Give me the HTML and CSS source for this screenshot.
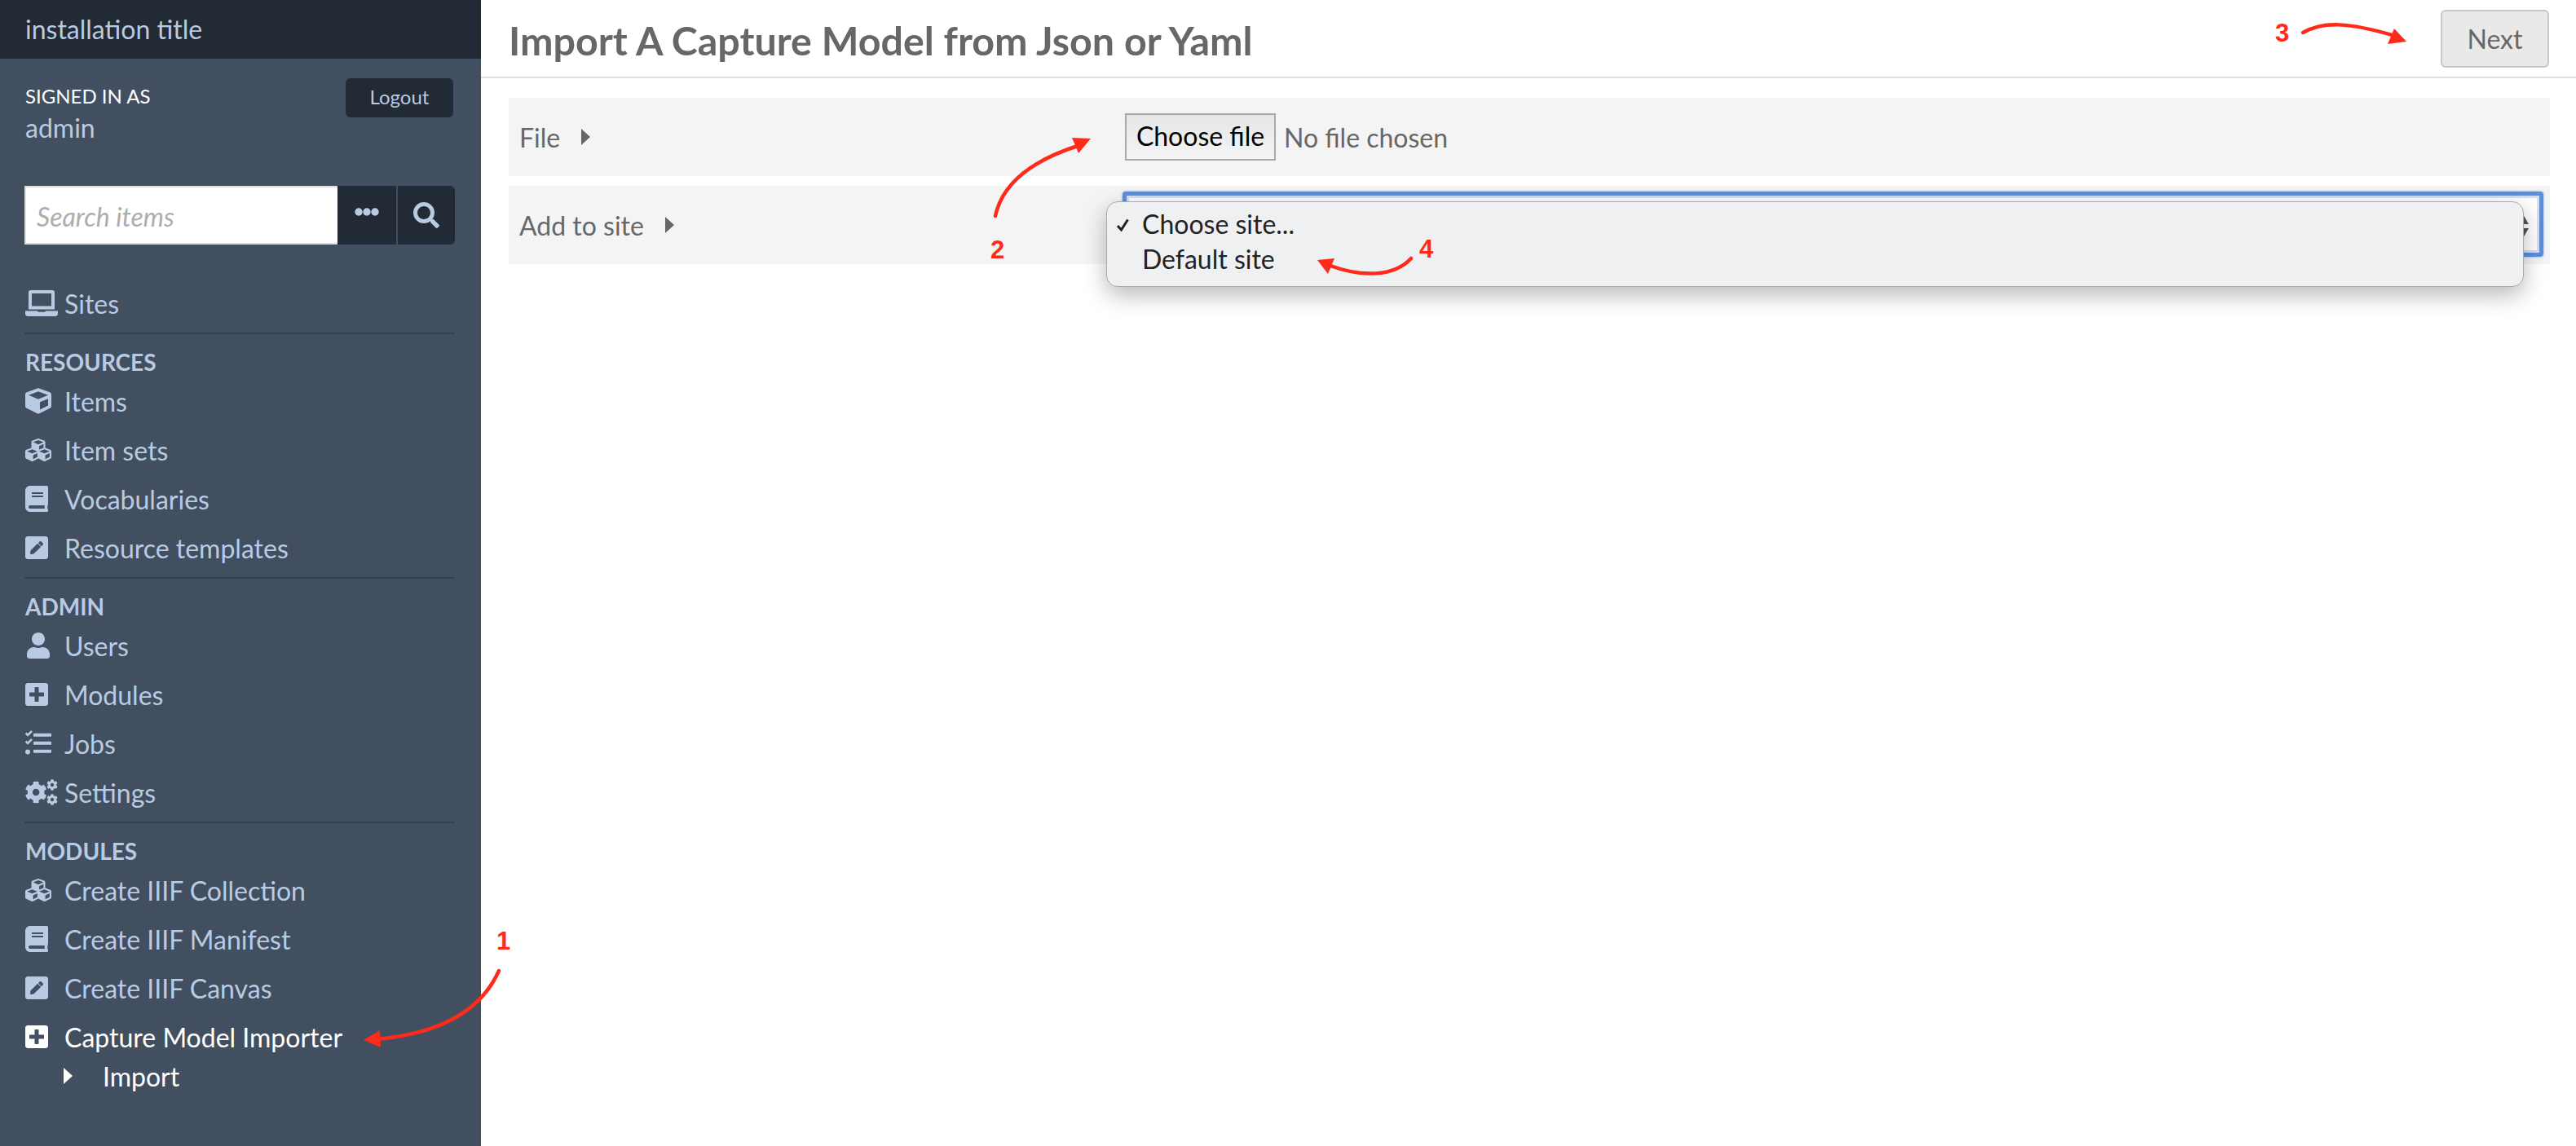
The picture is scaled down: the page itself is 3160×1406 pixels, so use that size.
FILE: index.html
```html
<!DOCTYPE html>
<html lang="en">
<head>
  <meta charset="UTF-8" />
  <title>Import A Capture Model</title>
  <link rel="stylesheet" href="styles.css">
</head>
<body>
  <svg class="defs" width="0" height="0">
    <symbol id="i-cube" viewBox="0 0 512 512"><path d="M239.1 6.3l-208 78c-18.7 7-31.1 25-31.1 45v225.1c0 18.2 10.3 34.8 26.5 42.9l208 104c13.5 6.8 29.4 6.8 42.9 0l208-104c16.3-8.1 26.5-24.8 26.5-42.9V129.3c0-20-12.4-37.9-31.1-44.9l-208-78C262 2.2 250 2.2 239.1 6.3zM256 68.4l192 72v1.1l-192 78-192-78v-1.1l192-72zm32 356V275.5l160-65v133.9l-160 80z"/></symbol>
    <symbol id="i-cubes" viewBox="0 0 512 512"><path d="M488.6 250.2L392 214V105.5c0-15-9.3-28.4-23.4-33.7l-100-37.5c-8.1-3.1-17.1-3.1-25.3 0l-100 37.5c-14.1 5.3-23.4 18.7-23.4 33.7V214l-96.6 36.2C9.3 255.5 0 268.9 0 283.9V394c0 13.6 7.7 26.1 19.9 32.2l100 50c10.1 5.1 22.1 5.1 32.2 0l103.9-52 103.9 52c10.1 5.1 22.1 5.1 32.2 0l100-50c12.2-6.1 19.9-18.6 19.9-32.2V283.9c0-15-9.3-28.4-23.4-33.7zM358 214.8l-85 31.9v-68.2l85-37v73.3zM154 104.1l102-38.2 102 38.2v.6l-102 41.4-102-41.4v-.6zm84 291.1l-85 42.5v-79.1l85-38.8v75.4zm0-112l-102 41.4-102-41.4v-.6l102-38.2 102 38.2v.6zm240 112l-85 42.5v-79.1l85-38.8v75.4zm0-112l-102 41.4-102-41.4v-.6l102-38.2 102 38.2v.6z"/></symbol>
    <symbol id="i-book" viewBox="0 0 448 512"><path d="M448 360V24c0-13.3-10.7-24-24-24H96C43 0 0 43 0 96v320c0 53 43 96 96 96h328c13.3 0 24-10.7 24-24v-16c0-7.5-3.5-14.3-8.9-18.7-4.2-15.4-4.2-59.3 0-74.7 5.4-4.3 8.9-11.1 8.9-18.6zM128 134c0-3.3 2.7-6 6-6h212c3.3 0 6 2.7 6 6v20c0 3.3-2.7 6-6 6H134c-3.3 0-6-2.7-6-6v-20zm0 64c0-3.3 2.7-6 6-6h212c3.3 0 6 2.7 6 6v20c0 3.3-2.7 6-6 6H134c-3.3 0-6-2.7-6-6v-20zm253.4 250H96c-17.7 0-32-14.3-32-32 0-17.6 14.4-32 32-32h285.4c-1.9 17.1-1.9 46.9 0 64z"/></symbol>
    <symbol id="i-pen" viewBox="0 0 448 512"><path d="M400 480H48c-26.5 0-48-21.5-48-48V80c0-26.5 21.5-48 48-48h352c26.5 0 48 21.5 48 48v352c0 26.5-21.5 48-48 48zM238.1 177.9L102.4 313.6l-6.3 57.1c-.8 7.6 5.6 14.1 13.3 13.3l57.1-6.3L302.2 242c2.3-2.3 2.3-6.1 0-8.5L246.7 178c-2.5-2.4-6.3-2.4-8.6-.1zM345 165.1L314.9 135c-9.4-9.4-24.6-9.4-33.9 0l-23.1 23.1c-2.3 2.3-2.3 6.1 0 8.5l55.5 55.5c2.3 2.3 6.1 2.3 8.5 0L345 199c9.3-9.3 9.3-24.5 0-33.9z"/></symbol>
    <symbol id="i-plus" viewBox="0 0 448 512"><path d="M400 32H48C21.5 32 0 53.5 0 80v352c0 26.5 21.5 48 48 48h352c26.5 0 48-21.5 48-48V80c0-26.5-21.5-48-48-48zm-32 252c0 6.6-5.4 12-12 12h-92v92c0 6.6-5.4 12-12 12h-56c-6.6 0-12-5.4-12-12v-92H92c-6.6 0-12-5.4-12-12v-56c0-6.6 5.4-12 12-12h92v-92c0-6.6 5.4-12 12-12h56c6.6 0 12 5.4 12 12v92h92c6.6 0 12 5.4 12 12v56z"/></symbol>
    <symbol id="i-user" viewBox="0 0 448 512"><path d="M224 256c70.7 0 128-57.3 128-128S294.7 0 224 0 96 57.3 96 128s57.3 128 128 128zm89.6 32h-16.7c-22.2 10.2-46.9 16-72.9 16s-50.6-5.8-72.9-16h-16.7C60.2 288 0 348.2 0 422.4V464c0 26.5 21.5 48 48 48h352c26.5 0 48-21.5 48-48v-41.6c0-74.2-60.2-134.4-134.4-134.4z"/></symbol>
    <symbol id="i-laptop" viewBox="0 0 640 512"><path d="M104 0h432c22 0 40 18 40 40v336H64V40c0-22 18-40 40-40zm24 64v248h384V64H128zM0 408h240c4 12 14 20 30 20h100c16 0 26-8 30-20h240v56c0 26-22 48-48 48H48c-26 0-48-22-48-48v-56z"/></symbol>
    <symbol id="i-tasks" viewBox="0 0 512 512"><path d="M176 58h320c9 0 16 7 16 16v32c0 9-7 16-16 16H176c-9 0-16-7-16-16V74c0-9 7-16 16-16zm0 160h320c9 0 16 7 16 16v32c0 9-7 16-16 16H176c-9 0-16-7-16-16v-32c0-9 7-16 16-16zm0 160h320c9 0 16 7 16 16v32c0 9-7 16-16 16H176c-9 0-16-7-16-16v-32c0-9 7-16 16-16zM48 376a48 48 0 1 1 0 96 48 48 0 0 1 0-96zM123 7l13 13c5 5 5 12 0 17l-78 78c-5 5-12 5-17 0L4 78c-5-5-5-12 0-17l13-13c5-5 12-5 17 0l16 16L106 7c5-5 12-5 17 0zm0 160l13 13c5 5 5 12 0 17l-78 78c-5 5-12 5-17 0L4 238c-5-5-5-12 0-17l13-13c5-5 12-5 17 0l16 16 56-57c5-5 12-5 17 0z"/></symbol>
    <symbol id="i-cog" viewBox="0 0 512 512"><path d="M487.4 315.7l-42.6-24.6c4.3-23.2 4.3-47 0-70.2l42.6-24.6c4.9-2.8 7.1-8.6 5.5-14-11.1-35.6-30-67.8-54.7-94.6-3.8-4.1-10-5.1-14.8-2.3L380.8 110c-17.9-15.4-38.5-27.3-60.8-35.1V25.8c0-5.6-3.9-10.5-9.4-11.7-36.7-8.2-74.3-7.8-109.2 0-5.5 1.2-9.4 6.1-9.4 11.7V75c-22.2 7.9-42.8 19.8-60.8 35.1L88.7 85.5c-4.9-2.8-11-1.9-14.8 2.3-24.7 26.7-43.6 58.9-54.7 94.6-1.7 5.4.6 11.2 5.5 14L67.3 221c-4.3 23.2-4.3 47 0 70.2l-42.6 24.6c-4.9 2.8-7.1 8.6-5.5 14 11.1 35.6 30 67.8 54.7 94.6 3.8 4.1 10 5.1 14.8 2.3l42.6-24.6c17.9 15.4 38.5 27.3 60.8 35.1v49.2c0 5.6 3.9 10.5 9.4 11.7 36.7 8.2 74.3 7.8 109.2 0 5.5-1.2 9.4-6.1 9.4-11.7v-49.2c22.2-7.9 42.8-19.8 60.8-35.1l42.6 24.6c4.9 2.8 11 1.9 14.8-2.3 24.7-26.7 43.6-58.9 54.7-94.6 1.5-5.5-.7-11.3-5.6-14.1zM256 336c-44.1 0-80-35.9-80-80s35.9-80 80-80 80 35.9 80 80-35.9 80-80 80z"/></symbol>
    <symbol id="i-cogs" viewBox="0 0 640 512">
      <use href="#i-cog" x="-10" y="36" width="440" height="440"/>
      <use href="#i-cog" x="416" y="0" width="224" height="224"/>
      <use href="#i-cog" x="416" y="288" width="224" height="224"/>
    </symbol>
  </svg>

  <div class="app">
    <aside class="sidebar">
      <div class="site-title">installation title</div>
      <div class="user-bar">
        <div>
          <div class="signed-in">SIGNED IN AS</div>
          <div class="user-name">admin</div>
        </div>
        <a class="logout">Logout</a>
      </div>
      <form class="search">
        <input class="search-input" type="text" placeholder="Search items">
        <span class="search-btn search-more"><svg width="30" height="10" viewBox="0 0 30 10"><circle cx="5" cy="5" r="4.7"/><circle cx="15" cy="5" r="4.7"/><circle cx="25" cy="5" r="4.7"/></svg></span>
        <span class="search-btn"><svg width="32" height="36" viewBox="0 0 512 512"><path d="M505 442.7L405.3 343c-4.5-4.5-10.6-7-17-7H372c27.6-35.3 44-79.7 44-128C416 93.1 322.9 0 208 0S0 93.1 0 208s93.1 208 208 208c48.3 0 92.7-16.4 128-44v16.3c0 6.4 2.5 12.5 7 17l99.7 99.7c9.4 9.4 24.6 9.4 33.9 0l28.3-28.3c9.4-9.4 9.4-24.6.1-34zM208 336c-70.7 0-128-57.2-128-128 0-70.7 57.2-128 128-128 70.7 0 128 57.2 128 128 0 70.7-57.2 128-128 128z"/></svg></span>
      </form>

      <nav class="nav">
        <ul class="nav-group">
          <li class="nav-item"><svg class="ic ic-wide"><use href="#i-laptop"/></svg>Sites</li>
        </ul>
        <h4 class="nav-heading">RESOURCES</h4>
        <ul class="nav-group">
          <li class="nav-item"><svg class="ic"><use href="#i-cube"/></svg>Items</li>
          <li class="nav-item"><svg class="ic"><use href="#i-cubes"/></svg>Item sets</li>
          <li class="nav-item"><svg class="ic ic-narrow"><use href="#i-book"/></svg>Vocabularies</li>
          <li class="nav-item"><svg class="ic ic-narrow"><use href="#i-pen"/></svg>Resource templates</li>
        </ul>
        <h4 class="nav-heading">ADMIN</h4>
        <ul class="nav-group">
          <li class="nav-item"><svg class="ic"><use href="#i-user"/></svg>Users</li>
          <li class="nav-item"><svg class="ic ic-narrow"><use href="#i-plus"/></svg>Modules</li>
          <li class="nav-item"><svg class="ic"><use href="#i-tasks"/></svg>Jobs</li>
          <li class="nav-item"><svg class="ic ic-wide"><use href="#i-cogs"/></svg>Settings</li>
        </ul>
        <h4 class="nav-heading">MODULES</h4>
        <ul class="nav-group last">
          <li class="nav-item"><svg class="ic"><use href="#i-cubes"/></svg>Create IIIF Collection</li>
          <li class="nav-item"><svg class="ic ic-narrow"><use href="#i-book"/></svg>Create IIIF Manifest</li>
          <li class="nav-item"><svg class="ic ic-narrow"><use href="#i-pen"/></svg>Create IIIF Canvas</li>
          <li class="nav-item active"><svg class="ic ic-narrow"><use href="#i-plus"/></svg>Capture Model Importer</li>
          <li class="nav-sub"><span class="caret caret-white"></span>Import</li>
        </ul>
      </nav>
    </aside>

    <main class="content">
      <header class="topbar">
        <h1 class="page-title">Import A Capture Model from Json or Yaml</h1>
        <button class="next-btn" type="button">Next</button>
      </header>

      <div class="fields">
        <div class="field">
          <div class="field-label">File<span class="caret"></span></div>
          <div class="field-control">
            <span class="file-btn">Choose file</span>
            <span class="file-name">No file chosen</span>
          </div>
        </div>
        <div class="field">
          <div class="field-label">Add to site<span class="caret"></span></div>
          <div class="field-control">
            <div class="select-box"><span class="select-arrows"></span></div>
            <ul class="select-menu">
              <li class="select-option"><svg class="tick" width="17" height="16" viewBox="0 0 17 16"><path d="M2 9L6.5 14L14.5 1.5"/></svg>Choose site...</li>
              <li class="select-option">Default site</li>
            </ul>
          </div>
        </div>
      </div>
    </main>
  </div>

  <svg class="notes" width="3160" height="1406" viewBox="0 0 3160 1406">
    <path class="note-line" d="M612 1191C590 1240 540 1268 462 1275"/>
    <path class="note-head" d="M446 1276L466 1264L467 1285Z"/>
    <text class="note-num" x="609" y="1165">1</text>

    <path class="note-line" d="M1221 265C1228 232 1255 200 1325 178"/>
    <path class="note-head" d="M1338 170L1315 169L1323 188Z"/>
    <text class="note-num" x="1215" y="317">2</text>

    <path class="note-line" d="M2825 40C2850 26 2880 27 2938 44"/>
    <path class="note-head" d="M2952 51L2937 35L2929 54Z"/>
    <text class="note-num" x="2791" y="51">3</text>

    <path class="note-line" d="M1731 317C1710 340 1670 340 1632 326"/>
    <path class="note-head" d="M1616 319L1637 317L1629 336Z"/>
    <text class="note-num" x="1741" y="316">4</text>
  </svg>
</body>
</html>
```

FILE: styles.css
```css
* { box-sizing: border-box; }
html, body { margin: 0; padding: 0; }
body { width: 3160px; height: 1406px; overflow: hidden; background: #fff; font-family: Lato, "Open Sans", sans-serif; font-size: 32px; color: #676767; position: relative; }
ul { list-style: none; margin: 0; padding: 0; }
.defs { position: absolute; }
.app { display: flex; height: 1406px; }

/* sidebar */
.sidebar { width: 590px; flex: none; background: #424f60; color: #b9cbe2; }
.site-title { height: 72px; padding-left: 31px; background: #222a35; font-size: 32px; line-height: 72px; }
.user-bar { display: flex; justify-content: space-between; align-items: flex-start; padding: 24px 34px 0 31px; height: 156px; }
.signed-in { font-size: 24px; line-height: 40px; margin-top: 2px; color: #fff; }
.user-name { font-size: 32px; line-height: 38px; }
.logout { width: 132px; height: 48px; border-radius: 6px; background: #222a35; font-size: 24px; line-height: 46px; text-align: center; }
.search { display: flex; height: 72px; margin: 0 32px 0 30px; }
.search-input { width: 384px; height: 72px; border: 2px solid #ddd; border-right: 0; padding: 2px 14px 0 13px; background: #fff; font: italic 32px Lato, sans-serif; outline: none; }
.search-input::placeholder { color: #adadad; opacity: 1; }
.search-btn { flex: 1; margin-left: 2px; display: flex; align-items: center; justify-content: center; background: #222a35; fill: #b9cbe2; border-radius: 0 6px 6px 0; }
.search-more { flex: none; width: 72px; margin-left: 0; border-radius: 0; padding-bottom: 8px; }
.nav { padding: 43px 32px 0 30px; }
.nav-group { border-bottom: 2px solid #364251; padding-bottom: 5px; }
.nav-group.last { border-bottom: 0; }
.nav-heading { margin: 0; padding: 15px 0 0 1px; height: 53px; font-size: 28px; line-height: 38px; font-weight: 700; }
.nav-item { display: flex; align-items: center; height: 60px; padding: 0 0 2px 1px; }
.nav-item.active { color: #fff; }
.nav-sub { display: flex; align-items: center; height: 36px; padding: 0 0 2px 48px; color: #fff; }
.ic { width: 32px; height: 32px; margin-right: 16px; fill: #b9cbe2; flex: none; }
.ic-narrow { width: 28px; margin-right: 20px; }
.ic-wide { width: 40px; margin-right: 8px; }
.active .ic { fill: #fff; }

.caret { display: inline-block; width: 0; height: 0; margin-left: 26px; border-left: 11px solid #676767; border-top: 10px solid transparent; border-bottom: 10px solid transparent; }
.caret-white { margin: 0 37px 0 0; border-left-color: #fff; }

/* main */
.content { flex: 1; padding: 0 32px 0 34px; }
.topbar { display: flex; justify-content: space-between; align-items: flex-start; height: 96px; margin: 0 -32px 0 -34px; padding: 12px 33px 0 34px; border-bottom: 2px solid #dfdfdf; }
.page-title { margin: 0; font-size: 48.4px; line-height: 74px; font-weight: 700; color: #676767; }
.next-btn { width: 133px; height: 71px; border: 2px solid #c8c8c8; border-radius: 6px; background: #e9e9e9; color: #676767; font: 32px Lato, sans-serif; }
.fields { display: flex; flex-direction: column; gap: 12px; margin-top: 24px; }
.field { display: flex; align-items: center; height: 96px; background: #f4f4f4; padding-left: 13px; }
.field-label { width: 743px; flex: none; display: flex; align-items: center; }
.field-control { flex: 1; display: flex; align-items: center; position: relative; height: 100%; }
.file-btn { width: 185px; height: 58px; border: 2px solid #a9a9a9; background: linear-gradient(#e6e6e6, #f4f4f4); color: #000; font-size: 32px; line-height: 52px; text-align: center; }
.file-name { margin-left: 10px; }
.select-box { position: absolute; left: -3px; top: 7px; width: 1743px; height: 80px; border: 5px solid #5b8fdf; border-radius: 4px; background: #fff; box-shadow: 0 0 3px #7ea8e8, inset 0 0 0 3px #d3dff3; }
.select-arrows { position: absolute; right: 13px; top: 23px; width: 14px; height: 29px; background: #555; clip-path: polygon(50% 0, 100% 41%, 0 41%, 0 59%, 100% 59%, 50% 100%, 0 59%, 0 41%); }

/* the open dropdown lies over the select */
.select-menu { position: absolute; left: -23px; top: 19px; width: 1739px; height: 105px; padding: 5px 0; border: 1px solid #aaa; border-radius: 14px; background: #eff0f2; box-shadow: 0 10px 28px rgba(0, 0, 0, 0.28); color: #222; z-index: 2; }
.select-option { position: relative; height: 43px; padding-left: 43px; font-size: 32px; line-height: 43px; }
.tick { position: absolute; left: 11px; top: 15px; fill: none; stroke: #222; stroke-width: 3; }

/* red annotations drawn over the screenshot */
.notes { position: absolute; left: 0; top: 0; z-index: 5; pointer-events: none; }
.note-line { fill: none; stroke: #ff2a1a; stroke-width: 4.5; stroke-linecap: round; }
.note-head { fill: #ff2a1a; }
.note-num { fill: #ff2a1a; font: 700 31px "Liberation Sans", Arial, sans-serif; }
```
